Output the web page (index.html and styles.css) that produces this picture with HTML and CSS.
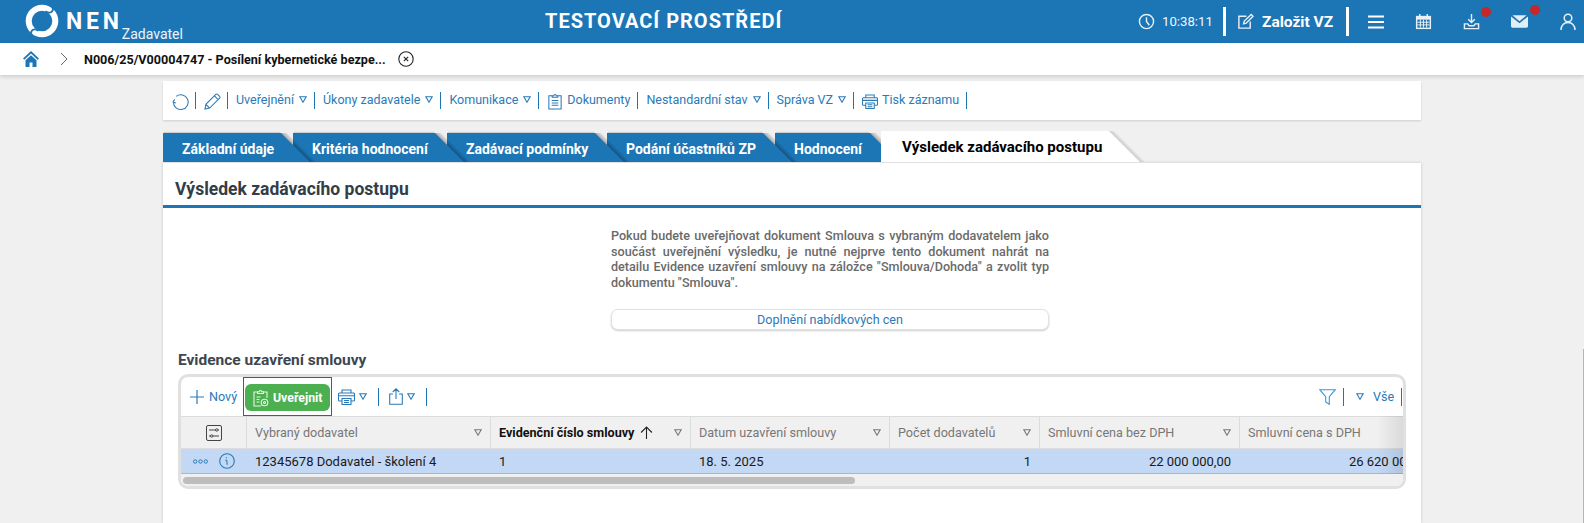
FILE: index.html
```html
<!DOCTYPE html>
<html lang="cs">
<head>
<meta charset="utf-8">
<title>NEN Zadavatel</title>
<link rel="stylesheet" href="styles.css">
</head>
<body>
<header class="topbar">
  <div class="brand">
    <svg class="logo" viewBox="-17 -17 34 34"><circle r="13.300" fill="none" stroke="#fff" stroke-width="6"/><path fill="none" stroke="#1c75b5" stroke-width="1.900" d="M9-17C13-11 10-6 3.500-9.800M-9 17C-13 11-10 6-3.500 9.800"/></svg>
    <span class="nen">NEN</span>
    <span class="role">Zadavatel</span>
  </div>
  <div class="env">TESTOVACÍ PROSTŘEDÍ</div>
  <div class="top-actions">
    <svg class="ti clock" viewBox="0 0 18 18"><circle cx="9" cy="9" r="7.500"/><path d="M9 4.500V9l3 4"/></svg>
    <span class="time">10:38:11</span>
    <span class="top-sep sep-a"></span>
    <svg class="ti pen" viewBox="0 0 18 18"><path d="M10 3.500H2v12.500h12V9"/><path d="M7 11.500l.7-3L15 1.500l2 2-7.300 7.300z"/></svg>
    <span class="create">Založit VZ</span>
    <span class="top-sep sep-b"></span>
    <svg class="ti burger" viewBox="0 0 16 14"><path d="M0 1.500h16M0 7h16M0 12.500h16"/></svg>
    <svg class="ti cal" viewBox="0 0 18 18"><path class="solid" d="M1 3h16v14H1z"/><path class="blue" d="M2.500 7h13v8.500h-13z"/><path class="grid-l" d="M2.500 9.800h13M2.500 12.600h13M5.700 7v8.500M9 7v8.500M12.300 7v8.500"/><path d="M5 1v3M13 1v3"/></svg>
    <span class="badged dl">
      <svg class="ti down" viewBox="0 0 18 18"><path d="M9 1v9M5.500 6.500L9 10l3.500-3.500"/><path d="M1.500 11.500h3.500l1.500 2h5l1.500-2h3.500v5h-15z"/></svg>
      <i class="dot"></i>
    </span>
    <span class="badged ml">
      <svg class="mail" viewBox="0 0 18 13"><path d="M1.500 0h15L9 6.200zM0 1.200v10.300a1.500 1.500 0 0 0 1.500 1.500h15a1.500 1.500 0 0 0 1.500-1.500V1.200L9 8.300z"/></svg>
      <i class="dot"></i>
    </span>
    <svg class="ti user" viewBox="0 0 16 18"><circle cx="8" cy="5" r="3.800"/><path d="M1 17c0-4.500 3-7.500 7-7.500s7 3 7 7.500"/></svg>
  </div>
</header>

<nav class="crumbs">
  <svg class="home" viewBox="0 0 16 16"><path fill="#1c75b5" d="M8 0L0 7.500l1.300 1.300L8 2.600l6.700 6.200L16 7.500z"/><path fill="#1c75b5" d="M2.500 9.300L8 4.200l5.500 5.100V16H9.500v-4.500h-3V16h-4z"/></svg>
  <svg class="chev" viewBox="0 0 8 14"><path d="M1 1l6 6-6 6"/></svg>
  <span class="crumb-text">N006/25/V00004747 - Posílení kybernetické bezpe...</span>
  <svg class="crumb-x" viewBox="0 0 16 16"><circle cx="8" cy="8" r="7.200"/><path d="M5.800 5.800l4.400 4.400M10.200 5.800l-4.400 4.400"/></svg>
</nav>

<main class="page">
  <div class="bar">
    <span class="bar-item icon-only"><svg class="ic" viewBox="0 0 18 18"><path d="M4.500 3.500A7.800 7.800 0 1 1 1.500 9.500"/><path d="M.8 9.500l2.200-2.800M.8 9.500l3.300 1.200"/></svg></span>
    <span class="bar-item icon-only"><svg class="ic" viewBox="0 0 18 18"><path d="M1 17l1-5L12.500 1.500a1.500 1.500 0 0 1 2 0l2 2a1.500 1.500 0 0 1 0 2L6 16zM2 12l4 4M11 3l4 4"/></svg></span>
    <span class="bar-item">Uveřejnění<svg class="tri" viewBox="0 0 8 7"><path d="M.8.700h6.400L4 6.200z"/></svg></span>
    <span class="bar-item">Úkony zadavatele<svg class="tri" viewBox="0 0 8 7"><path d="M.8.700h6.400L4 6.200z"/></svg></span>
    <span class="bar-item">Komunikace<svg class="tri" viewBox="0 0 8 7"><path d="M.8.700h6.400L4 6.200z"/></svg></span>
    <span class="bar-item"><svg class="ic doc" viewBox="0 0 16 18"><path d="M5 3H1.500v14h13V3H11"/><path d="M5 4.500V2.800h1.700a1.300 1.300 0 0 1 2.600 0H11v1.700zM4.500 8h7M4.500 10.500h7M4.500 13h7"/></svg>Dokumenty</span>
    <span class="bar-item">Nestandardní stav<svg class="tri" viewBox="0 0 8 7"><path d="M.8.700h6.400L4 6.200z"/></svg></span>
    <span class="bar-item">Správa VZ<svg class="tri" viewBox="0 0 8 7"><path d="M.8.700h6.400L4 6.200z"/></svg></span>
    <span class="bar-item"><svg class="ic doc" viewBox="0 0 17 16"><path d="M4 4V1h9v3M4 12H1.500a1 1 0 0 1-1-1V5a1 1 0 0 1 1-1h14a1 1 0 0 1 1 1v6a1 1 0 0 1-1 1H13"/><path d="M4 9.500h9v6H4zM6 11.500h5M6 13.500h5M1 6.800h15"/></svg>Tisk záznamu</span>
  </div>

  <div class="tabs">
    <span class="tab t1">Základní údaje</span>
    <span class="tab t2">Kritéria hodnocení</span>
    <span class="tab t3">Zadávací podmínky</span>
    <span class="tab t4">Podání účastníků ZP</span>
    <span class="tab t5">Hodnocení</span>
    <span class="tab active">Výsledek zadávacího postupu</span>
  </div>

  <section class="card">
    <h1 class="card-title">Výsledek zadávacího postupu</h1>
    <p class="note">Pokud budete uveřejňovat dokument Smlouva s vybraným dodavatelem jako součást uveřejnění výsledku, je nutné nejprve tento dokument nahrát na detailu Evidence uzavření smlouvy na záložce "Smlouva/Dohoda" a zvolit typ dokumentu "Smlouva".</p>
    <button class="wide-btn">Doplnění nabídkových cen</button>
    <h2 class="sub-title">Evidence uzavření smlouvy</h2>

    <div class="frame">
      <div class="grid-tools">
        <span class="new"><svg class="plus" viewBox="0 0 14 14"><path d="M7 0v14M0 7h14"/></svg>Nový</span>
        <span class="publish-mark"><button class="publish"><svg class="pub-ic" viewBox="0 0 16 18"><path d="M5 3H1.500v14h7M11 3h3.500v6"/><path d="M5 4.500V2.800h1.700a1.300 1.300 0 0 1 2.600 0H11v1.700zM4 8h4M4 10.500h3M4 13h3"/><circle cx="12" cy="13.500" r="3.300"/><circle cx="12" cy="13.500" r="1"/></svg>Uveřejnit</button></span>
        <svg class="ic print" viewBox="0 0 17 16"><path d="M4 4V1h9v3M4 12H1.500a1 1 0 0 1-1-1V5a1 1 0 0 1 1-1h14a1 1 0 0 1 1 1v6a1 1 0 0 1-1 1H13"/><path d="M4 9.500h9v6H4zM6 11.500h5M6 13.500h5M1 6.800h15"/></svg>
        <svg class="tri tool-tri" viewBox="0 0 8 7"><path d="M.8.700h6.400L4 6.200z"/></svg>
        <span class="vsep s1"></span>
        <svg class="ic share" viewBox="0 0 14 17"><path d="M4 6H.7v10.300h12.600V6H10M7 11V.8M3.800 4L7 .8 10.200 4"/></svg>
        <svg class="tri tool-tri" viewBox="0 0 8 7"><path d="M.8.700h6.400L4 6.200z"/></svg>
        <span class="vsep s2"></span>
        <span class="tools-right">
          <svg class="ic filter" viewBox="0 0 17 16"><path d="M.7.700h15.600l-6 7v7.600l-3.600-2.300V7.700z"/></svg>
          <span class="vsep s3"></span>
          <svg class="tri" viewBox="0 0 8 7"><path d="M.8.700h6.400L4 6.200z"/></svg>
          <span class="all">Vše</span>
          <span class="vsep s4"></span>
        </span>
      </div>

      <div class="table">
        <div class="cell head tool-cell"><svg class="settings" viewBox="0 0 16 16"><rect x=".5" y=".5" width="15" height="15" rx="1.500"/><path d="M3 5h6.500M12 5h1M3 11h1.500M7 11h6"/><circle cx="10.700" cy="5" r="1.200"/><circle cx="5.700" cy="11" r="1.200"/></svg></div>
        <div class="cell head">Vybraný dodavatel<svg class="tri h-tri" viewBox="0 0 8 7"><path d="M.8.700h6.400L4 6.200z"/></svg></div>
        <div class="cell head sorted">Evidenční číslo smlouvy<svg class="sort" viewBox="0 0 12 12"><path d="M6 12V1M1 6l5-5 5 5"/></svg><svg class="tri h-tri" viewBox="0 0 8 7"><path d="M.8.700h6.400L4 6.200z"/></svg></div>
        <div class="cell head">Datum uzavření smlouvy<svg class="tri h-tri" viewBox="0 0 8 7"><path d="M.8.700h6.400L4 6.200z"/></svg></div>
        <div class="cell head">Počet dodavatelů<svg class="tri h-tri" viewBox="0 0 8 7"><path d="M.8.700h6.400L4 6.200z"/></svg></div>
        <div class="cell head">Smluvní cena bez DPH<svg class="tri h-tri" viewBox="0 0 8 7"><path d="M.8.700h6.400L4 6.200z"/></svg></div>
        <div class="cell head">Smluvní cena s DPH</div>

        <div class="cell row row-tools"><svg class="dots" viewBox="0 0 15 5"><circle cx="2.200" cy="2.500" r="1.700"/><circle cx="7.500" cy="2.500" r="1.700"/><circle cx="12.800" cy="2.500" r="1.700"/></svg><svg class="info" viewBox="0 0 16 16"><circle cx="8" cy="8" r="7.300"/><path d="M7.400 4.300v1M6.300 7.300h1.400l.5 4.500"/></svg></div>
        <div class="cell row">12345678 Dodavatel - školení 4</div>
        <div class="cell row">1</div>
        <div class="cell row">18. 5. 2025</div>
        <div class="cell row num">1</div>
        <div class="cell row num">22 000 000,00</div>
        <div class="cell row num">26 620 000,00</div>
      </div>
      <div class="hscroll"><span class="thumb"></span></div>
      <span class="fade"></span>
    </div>
  </section>
</main>
<span class="page-scroll"></span>
</body>
</html>
```

FILE: styles.css
```css
* { box-sizing: border-box; }
html, body { margin: 0; height: 100%; }
body {
  overflow: hidden;
  background: #f0f0f0;
  font-family: Roboto, "Liberation Sans", sans-serif;
  font-size: 12.600px;
  color: #222;
}
i { display: inline-block; font-style: normal; }
svg { display: block; flex: none; }

/* top bar */
.topbar {
  height: 43px;
  background: #1c75b5;
  color: #fff;
  display: grid;
  grid-template-columns: 545px auto 1fr;
  align-items: center;
}
.brand { display: flex; height: 43px; padding-left: 25px; position: relative; }
.logo { width: 34px; height: 34px; margin-top: 4px; }
.nen { font-size: 23px; font-weight: 700; letter-spacing: 3.800px; margin: 8px 0 0 7px; line-height: 27px; }
.role { font-size: 14px; margin: 26px 0 0 -1px; line-height: 17px; color: #eef5fa; }
.env { font-size: 20px; font-weight: 700; letter-spacing: 1px; padding-bottom: 1px; }
.top-actions { display: flex; align-items: center; justify-content: flex-end; height: 43px; padding-right: 8px; }
.ti { fill: none; stroke: #e8f1f8; stroke-width: 1.500; }
.clock { width: 17px; height: 17px; }
.time { font-size: 13.200px; margin-left: 7px; width: 49px; color: #f0f6fb; }
.top-sep { width: 3px; height: 29px; background: #fff; }
.sep-a { margin-left: 12px; }
.pen { width: 17px; height: 17px; margin-left: 11px; }
.create { font-size: 15.500px; font-weight: 700; margin-left: 8px; width: 73px; white-space: nowrap; }
.sep-b { margin-left: 11px; }
.burger { width: 16px; height: 14px; margin-left: 19px; stroke: #fff; stroke-width: 2; }
.cal { width: 17px; height: 17px; margin-left: 31px; }
.cal .solid { fill: #e8f1f8; stroke: none; }
.cal .blue { fill: #1c75b5; stroke: none; }
.cal .grid-l { stroke-width: 1; }
.badged { position: relative; display: block; }
.dl { margin-left: 31px; width: 17px; height: 17px; }
.down { width: 17px; height: 17px; }
.ml { margin-left: 31px; width: 17px; height: 13px; }
.mail { width: 17px; height: 13px; fill: #e3edf5; }
.dot { position: absolute; width: 10px; height: 10px; border-radius: 50%; background: #c62828; }
.dl .dot { left: 18px; top: -6px; }
.ml .dot { left: 19px; top: -10px; }
.user { width: 16px; height: 18px; margin-left: 32px; }

/* breadcrumb */
.crumbs {
  height: 32px;
  background: #fff;
  display: flex;
  align-items: center;
  box-shadow: 0 2px 4px rgba(0,0,0,.14);
  position: relative;
}
.home { width: 16px; height: 16px; margin-left: 23px; }
.chev { width: 8px; height: 14px; margin-left: 21px; fill: none; stroke: #666; stroke-width: 1; }
.crumb-text { font-size: 12.600px; font-weight: 700; color: #111; margin-left: 16px; width: 301px; white-space: nowrap; }
.crumb-x { width: 16px; height: 16px; margin-left: 13px; fill: none; stroke: #222; stroke-width: 1.100; }

/* page */
.page { width: 1258px; margin: 6px auto 0; }
.bar {
  height: 39px;
  background: #fff;
  display: flex;
  align-items: center;
  padding-left: 9px;
  box-shadow: 0 1px 2px rgba(0,0,0,.14);
  color: #2a7ab8;
  font-size: 12.500px;
  white-space: nowrap;
}
.bar-item { display: flex; align-items: center; height: 17px; padding: 0 7px 2px 8px; border-right: 1px solid #1c75b5; }
.bar-item:first-child { padding-left: 0; padding-right: 6px; }
.icon-only { padding-right: 6px; padding-left: 8px; }
.ic { fill: none; stroke: #2a7ab8; stroke-width: 1.100; width: 17px; height: 17px; }
.bar-item .ic { margin-bottom: -3px; }
.bar-item .doc { width: 16px; margin-right: 4px; margin-left: 0; }
.tri { width: 8px; height: 7px; margin-left: 5px; fill: none; stroke: #2a7ab8; stroke-width: 1.100; }

/* tabs */
.tabs { display: flex; margin-top: 11px; height: 31px; position: relative; }
.tab {
  position: relative;
  height: 29px;
  margin-top: 2px;
  background: #1c75b5;
  color: #fff;
  font-weight: 700;
  font-size: 14px;
  line-height: 33px;
  padding-left: 19px;
  white-space: nowrap;
  box-shadow: 0 -2px 1px -1px #cfcfcf;
}
.tab::after, .tab::before {
  content: "";
  position: absolute;
  left: 100%;
  top: 0;
  width: 29px;
  height: 29px;
  clip-path: polygon(0 0, 100% 100%, 0 100%);
}
.tab::before {
  width: 35px;
  height: 29px;
  clip-path: polygon(0 0, 6px 0, 35px 29px, 0 29px);
  background: linear-gradient(45deg, rgba(0,0,0,.3) 45%, rgba(0,0,0,.04) 55%);
  z-index: 2;
}
.tab::after { background: #1c75b5; z-index: 3; }
.t1 { width: 118px; margin-right: 12px; z-index: 6; }
.t2 { width: 142px; margin-right: 12px; z-index: 5; }
.t3 { width: 148px; margin-right: 12px; z-index: 4; }
.t4 { width: 156px; margin-right: 12px; z-index: 3; }
.t5 { width: 95px; margin-right: 11px; z-index: 2; }
.tab.active {
  width: 228px;
  height: 31px;
  margin-top: 0;
  background: #fff;
  color: #000;
  font-size: 15px;
  padding-left: 21px;
  line-height: 32px;
  box-shadow: none;
  z-index: 7;
}
.tab.active::after { background: #fff; width: 31px; height: 31px; }
.tab.active::before {
  width: 37px;
  height: 31px;
  clip-path: polygon(0 0, 6px 0, 37px 31px, 0 31px);
  background: linear-gradient(45deg, rgba(0,0,0,.15) 46%, rgba(0,0,0,0) 55%);
}

/* card */
.card {
  background: #fff;
  height: 360px;
  margin-top: 1px;
  padding: 0 0 0 15px;
  box-shadow: 0 0 3px rgba(0,0,0,.18);
  overflow: hidden;
}
.card-title {
  margin: 0 0 0 -15px;
  height: 45px;
  padding: 15px 0 0 12px;
  border-bottom: 3px solid #1c75b5;
  font-size: 17.500px;
  line-height: 22px;
  font-weight: 700;
  color: #333d47;
}
.note {
  margin: 20px 0 0 433px;
  width: 438px;
  font-size: 12.600px;
  line-height: 15.500px;
  font-weight: 500;
  color: #6a6a6a;
  text-align: justify;
}
.wide-btn {
  display: block;
  margin: 19px 0 0 433px;
  width: 438px;
  height: 21px;
  background: #fff;
  border: 1px solid #e2e2e2;
  border-radius: 7px;
  box-shadow: 0 1px 2px rgba(0,0,0,.2);
  color: #2a7ab8;
  font: 12.600px Roboto, "Liberation Sans", sans-serif;
  padding: 0;
}
.sub-title {
  margin: 21px 0 0 0;
  font-size: 15.500px;
  line-height: 18px;
  font-weight: 700;
  color: #3d4650;
}

/* grid frame */
.frame {
  position: relative;
  margin-top: 5px;
  width: 1228px;
  height: 115px;
  border: 3px solid #e0e0e0;
  border-radius: 10px;
  overflow: hidden;
  background: #fff;
}
.grid-tools { height: 39px; display: flex; align-items: center; color: #2a7ab8; }
.new { display: flex; align-items: center; margin-left: 9px; width: 45px; }
.plus { width: 14px; height: 14px; margin-right: 5px; fill: none; stroke: #2a7ab8; stroke-width: 1.200; }
.publish-mark { display: block; border: 1px solid #e02020; padding: 6px 1px; height: 39px; margin-left: 8px; }
.publish {
  display: flex;
  align-items: center;
  width: 85px;
  height: 27px;
  padding: 0 0 0 7px;
  background: #4caf50;
  border: 0;
  border-radius: 6px;
  color: #fff;
  font: 700 12.300px Roboto, "Liberation Sans", sans-serif;
}
.pub-ic { width: 17px; height: 18px; margin-right: 4px; fill: none; stroke: #e8f5e9; stroke-width: 1.100; }
.print { margin-left: 6px; width: 17px; height: 16px; }
.tool-tri { margin-left: 4px; }
.vsep { display: block; width: 1px; height: 18px; background: #1c75b5; }
.s1 { margin-left: 11px; }
.share { margin-left: 10px; width: 14px; height: 17px; }
.s2 { margin-left: 11px; }
.tools-right { margin-left: auto; display: flex; align-items: center; padding-right: 1px; }
.filter { width: 17px; height: 16px; stroke: #3d95d8; }
.s3 { margin-left: 7px; }
.tools-right .tri { margin-left: 12px; }
.all { margin-left: 9px; width: 21px; }
.s4 { margin-left: 7px; }

.table {
  display: grid;
  grid-template-columns: 66px 244px 200px 199px 150px 200px 200px;
  grid-template-rows: 33px 25px;
  width: 1259px;
}
.cell { display: flex; align-items: center; padding-left: 8px; white-space: nowrap; position: relative; }
.head {
  background: #f0f0f0;
  color: #777;
  border-top: 1px solid #dcdcdc;
  border-bottom: 1px solid #dcdcdc;
  border-right: 1px solid #dcdcdc;
}
.tool-cell { justify-content: center; padding: 0; }
.settings { width: 16px; height: 16px; fill: none; stroke: #444; stroke-width: 1; }
.sorted { color: #111; font-weight: 700; }
.sort { width: 13px; height: 13px; margin-left: 6px; fill: none; stroke: #222; stroke-width: 1; }
.h-tri { position: absolute; right: 8px; top: 12px; stroke: #777; margin: 0; }
.row { background: #c2d8f4; border-bottom: 1px solid #8dbdf0; color: #1a1a1a; font-size: 13px; }
.num { justify-content: flex-end; padding: 0 9px 0 0; }
.row-tools { padding: 0 0 0 12px; }
.dots { width: 15px; height: 5px; fill: none; stroke: #2a7ab8; stroke-width: 1; }
.info { width: 16px; height: 16px; margin-left: 11px; fill: none; stroke: #2a7ab8; stroke-width: 1.100; }
.hscroll { height: 12px; background: #f0f0f0; padding: 3px 0 0 2px; }
.thumb { display: block; width: 672px; height: 7px; border-radius: 4px; background: #bdbdbd; }
.fade {
  position: absolute;
  right: 0;
  top: 39px;
  width: 26px;
  height: 58px;
  background: linear-gradient(90deg, rgba(0,0,0,0), rgba(0,0,0,.09));
}
.page-scroll { position: absolute; right: 0; top: 349px; bottom: 0; width: 1px; background: #b5b5b5; }
```
